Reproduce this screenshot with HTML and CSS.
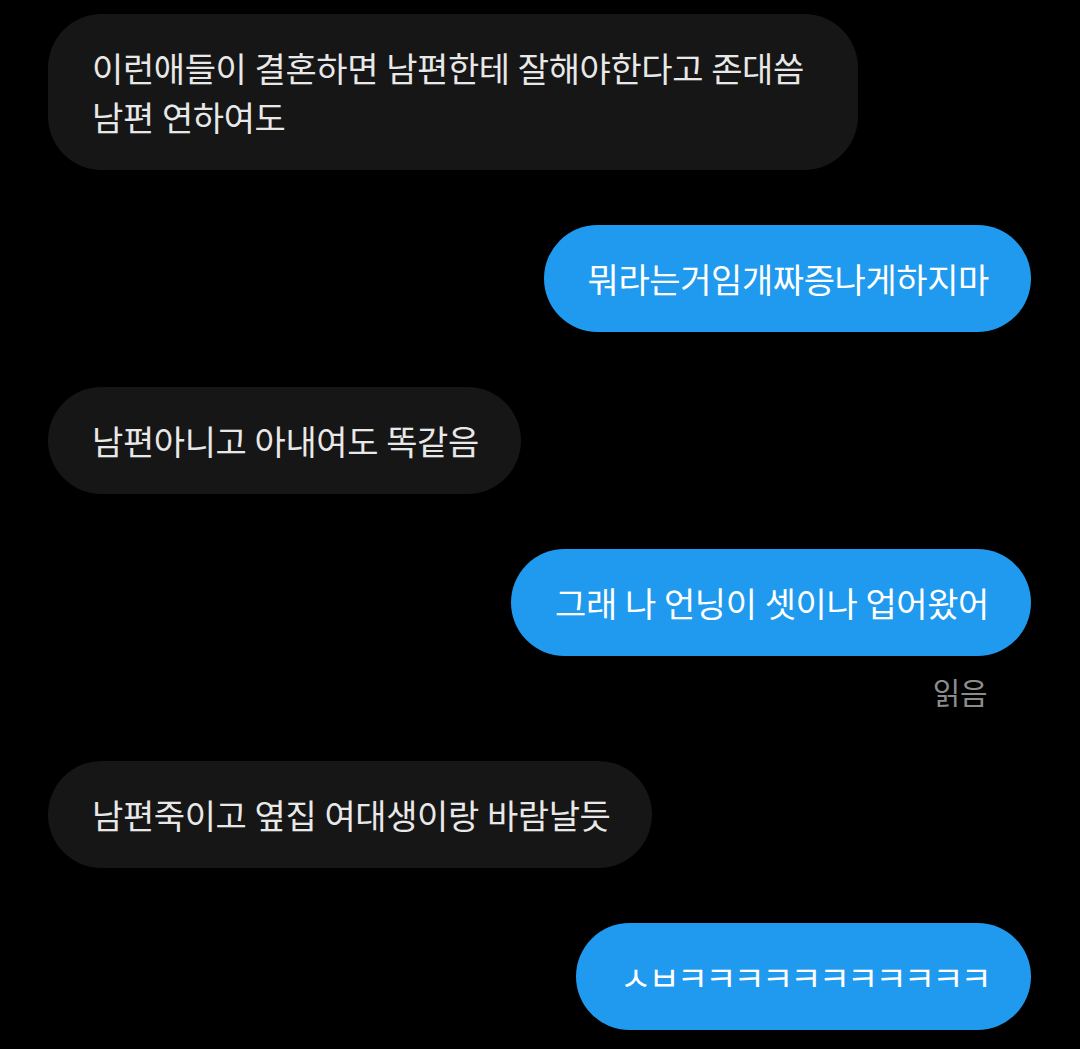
FILE: index.html
```html
<!DOCTYPE html>
<html lang="ko">
<head>
  <meta charset="UTF-8" />
  <meta name="viewport" content="width=device-width, initial-scale=1.0"/>
  <title>대화</title>
  <link rel="stylesheet" href="styles.css">
</head>
<body>
  <div class="chat">
    <div class="row in">
      <div class="bubble">이런애들이 결혼하면 남편한테 잘해야한다고 존대씀 남편 연하여도</div>
    </div>
    <div class="row out">
      <div class="bubble">뭐라는거임개짜증나게하지마</div>
    </div>
    <div class="row in">
      <div class="bubble">남편아니고 아내여도 똑같음</div>
    </div>
    <div class="row out">
      <div class="bubble">그래 나 언닝이 셋이나 업어왔어</div>
      <div class="read">읽음</div>
    </div>
    <div class="row in">
      <div class="bubble">남편죽이고 옆집 여대생이랑 바람날듯</div>
    </div>
    <div class="row out">
      <div class="bubble jamo">ㅅㅂㅋㅋㅋㅋㅋㅋㅋㅋㅋㅋㅋ</div>
    </div>
  </div>
</body>
</html>
```

FILE: styles.css
```css
* {
  margin: 0;
  padding: 0;
  box-sizing: border-box;
}
html, body {
  height: 100%;
  width: 100%;
  overflow: hidden;
}
body {
  background: #000;
  font-family: "Noto Sans CJK KR", "Noto Sans", sans-serif;
}
.chat {
  display: flex;
  flex-direction: column;
  gap: 55px;
  padding: 14px 49px 0 48px;
}
.row {
  display: flex;
  flex-direction: column;
}
.row.in {
  align-items: flex-start;
}
.row.out {
  align-items: flex-end;
}
.bubble {
  max-width: 810px;
  padding: 29px 42px 29px 44px;
  border-radius: 54px;
  font-size: 34px;
  line-height: 49px;
  letter-spacing: -0.4px;
  word-spacing: -1px;
}
.bubble.jamo {
  letter-spacing: -2.9px;
}
.in .bubble {
  background: #161616;
  color: #e8e8e8;
}
.out .bubble {
  background: #1f9aee;
  color: #fff;
}
.read {
  margin-top: 20px;
  margin-right: 44px;
  font-size: 30px;
  line-height: 30px;
  color: #8c8c8c;
  letter-spacing: -0.5px;
}
```
